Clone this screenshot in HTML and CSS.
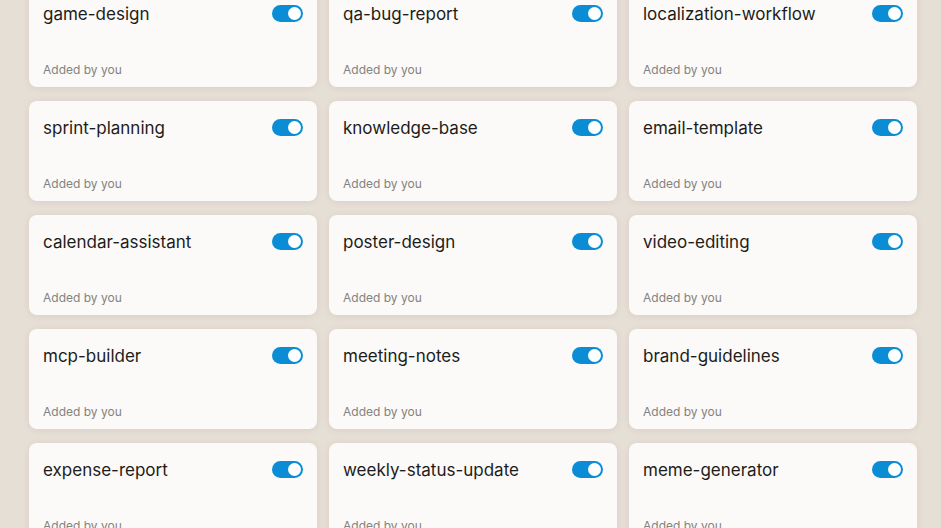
FILE: index.html
```html
<!DOCTYPE html>
<html lang="en">
<head>
<meta charset="utf-8">
<title>Skills</title>
<link rel="stylesheet" href="styles.css">
</head>
<body>
<div class="grid">
  <div class="card"><div class="head"><span class="name">game-design</span><span class="toggle"><span class="knob"></span></span></div><div class="meta">Added by you</div></div>
  <div class="card"><div class="head"><span class="name">qa-bug-report</span><span class="toggle"><span class="knob"></span></span></div><div class="meta">Added by you</div></div>
  <div class="card"><div class="head"><span class="name">localization-workflow</span><span class="toggle"><span class="knob"></span></span></div><div class="meta">Added by you</div></div>
  <div class="card"><div class="head"><span class="name">sprint-planning</span><span class="toggle"><span class="knob"></span></span></div><div class="meta">Added by you</div></div>
  <div class="card"><div class="head"><span class="name">knowledge-base</span><span class="toggle"><span class="knob"></span></span></div><div class="meta">Added by you</div></div>
  <div class="card"><div class="head"><span class="name">email-template</span><span class="toggle"><span class="knob"></span></span></div><div class="meta">Added by you</div></div>
  <div class="card"><div class="head"><span class="name">calendar-assistant</span><span class="toggle"><span class="knob"></span></span></div><div class="meta">Added by you</div></div>
  <div class="card"><div class="head"><span class="name">poster-design</span><span class="toggle"><span class="knob"></span></span></div><div class="meta">Added by you</div></div>
  <div class="card"><div class="head"><span class="name">video-editing</span><span class="toggle"><span class="knob"></span></span></div><div class="meta">Added by you</div></div>
  <div class="card"><div class="head"><span class="name">mcp-builder</span><span class="toggle"><span class="knob"></span></span></div><div class="meta">Added by you</div></div>
  <div class="card"><div class="head"><span class="name">meeting-notes</span><span class="toggle"><span class="knob"></span></span></div><div class="meta">Added by you</div></div>
  <div class="card"><div class="head"><span class="name">brand-guidelines</span><span class="toggle"><span class="knob"></span></span></div><div class="meta">Added by you</div></div>
  <div class="card"><div class="head"><span class="name">expense-report</span><span class="toggle"><span class="knob"></span></span></div><div class="meta">Added by you</div></div>
  <div class="card"><div class="head"><span class="name">weekly-status-update</span><span class="toggle"><span class="knob"></span></span></div><div class="meta">Added by you</div></div>
  <div class="card"><div class="head"><span class="name">meme-generator</span><span class="toggle"><span class="knob"></span></span></div><div class="meta">Added by you</div></div>
</div>
</body>
</html>
```

FILE: styles.css
```css
html, body {
  margin: 0;
  padding: 0;
  height: 100%;
  overflow: hidden;
}
body {
  background: #e6dfd5;
  font-family: "Inter", "Noto Sans", sans-serif;
}
.grid {
  display: grid;
  grid-template-columns: repeat(3, 288px);
  grid-auto-rows: 100px;
  column-gap: 12px;
  row-gap: 14px;
  padding-left: 29px;
  margin-top: -13px;
}
.card {
  background: #fbfaf8;
  border-radius: 8px;
  box-shadow: 0 1px 6px rgba(120, 100, 80, 0.12);
  padding: 0 14px;
  display: flex;
  flex-direction: column;
  justify-content: space-between;
  box-sizing: border-box;
}
.head {
  display: flex;
  align-items: center;
  justify-content: space-between;
  height: 28px;
  margin-top: 12px;
}
.name {
  font-size: 17px;
  color: #1d1c1a;
  letter-spacing: 0;
  padding-top: 1px;
}
.toggle {
  width: 31px;
  height: 17px;
  border-radius: 9px;
  background: #0b8dd6;
  display: flex;
  align-items: center;
  justify-content: flex-end;
  padding: 0 2px;
  box-sizing: border-box;
}
.knob {
  width: 13px;
  height: 13px;
  border-radius: 50%;
  background: #ffffff;
}
.meta {
  font-size: 12px;
  color: #85827c;
  margin-bottom: 10px;
}
```
